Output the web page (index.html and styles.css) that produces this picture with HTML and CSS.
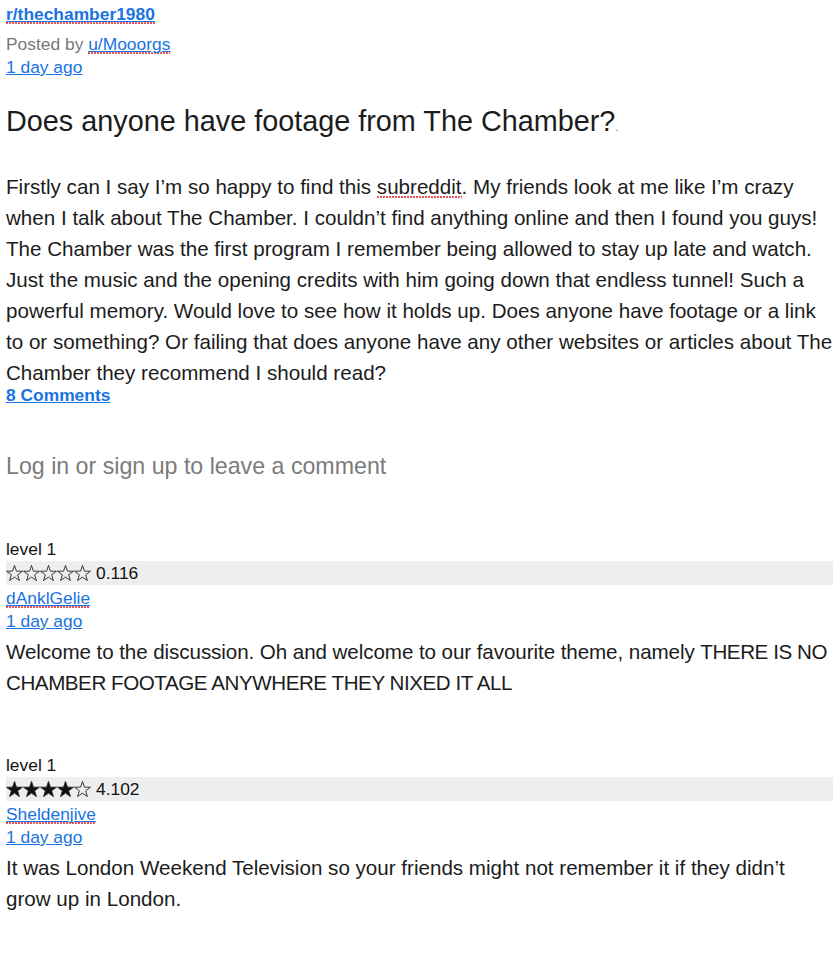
FILE: index.html
```html
<!DOCTYPE html>
<html lang="en">
<head>
<meta charset="utf-8">
<title>Does anyone have footage from The Chamber?</title>
<link rel="stylesheet" href="styles.css">
</head>
<body>
<main class="page">
  <header class="post-head">
    <a class="sub" href="#"><span class="sp">r/thechamber1980</span></a>
    <div class="meta">Posted by <a href="#"><span class="sp">u/Mooorgs</span></a></div>
    <div class="meta"><a href="#">1 day ago</a></div>
  </header>
  <h1 class="title">Does anyone have footage from The Chamber?<span class="dot">.</span></h1>
  <p class="body">Firstly can I say I’m so happy to find this <span class="sp">subreddit</span>. My friends look at me like I’m crazy when I talk about The Chamber. I couldn’t find anything online and then I found you guys! The Chamber was the first program I remember being allowed to stay up late and watch. Just the music and the opening credits with him going down that endless tunnel! Such a powerful memory. Would love to see how it holds up. Does anyone have footage or a link to or something? Or failing that does anyone have any other websites or articles about The Chamber they recommend I should read?</p>
  <a class="comments-link" href="#">8 Comments</a>

  <div class="login">Log in or sign up to leave a comment</div>

  <section class="comment">
    <div class="level">level 1</div>
    <div class="rating">
      <span class="stars">
        <svg viewBox="1.5 1.5 21 20" class="star"><polygon points="12,2 14.41,9.18 21.99,9.26 15.9,13.77 18.17,20.99 12,16.6 5.83,20.99 8.1,13.77 2.01,9.26 9.59,9.18"/></svg>
        <svg viewBox="1.5 1.5 21 20" class="star"><polygon points="12,2 14.41,9.18 21.99,9.26 15.9,13.77 18.17,20.99 12,16.6 5.83,20.99 8.1,13.77 2.01,9.26 9.59,9.18"/></svg>
        <svg viewBox="1.5 1.5 21 20" class="star"><polygon points="12,2 14.41,9.18 21.99,9.26 15.9,13.77 18.17,20.99 12,16.6 5.83,20.99 8.1,13.77 2.01,9.26 9.59,9.18"/></svg>
        <svg viewBox="1.5 1.5 21 20" class="star"><polygon points="12,2 14.41,9.18 21.99,9.26 15.9,13.77 18.17,20.99 12,16.6 5.83,20.99 8.1,13.77 2.01,9.26 9.59,9.18"/></svg>
        <svg viewBox="1.5 1.5 21 20" class="star"><polygon points="12,2 14.41,9.18 21.99,9.26 15.9,13.77 18.17,20.99 12,16.6 5.83,20.99 8.1,13.77 2.01,9.26 9.59,9.18"/></svg>
      </span>
      <span class="score">0.116</span>
    </div>
    <div class="author"><a href="#"><span class="sp">dAnklGelie</span></a></div>
    <div class="time"><a href="#">1 day ago</a></div>
    <p class="text tight">Welcome to the discussion. Oh and welcome to our favourite theme, namely <span class="caps">THERE IS NO CHAMBER FOOTAGE ANYWHERE THEY NIXED IT ALL</span></p>
  </section>

  <section class="comment">
    <div class="level">level 1</div>
    <div class="rating">
      <span class="stars">
        <svg viewBox="1.5 1.5 21 20" class="star full"><polygon points="12,2 14.41,9.18 21.99,9.26 15.9,13.77 18.17,20.99 12,16.6 5.83,20.99 8.1,13.77 2.01,9.26 9.59,9.18"/></svg>
        <svg viewBox="1.5 1.5 21 20" class="star full"><polygon points="12,2 14.41,9.18 21.99,9.26 15.9,13.77 18.17,20.99 12,16.6 5.83,20.99 8.1,13.77 2.01,9.26 9.59,9.18"/></svg>
        <svg viewBox="1.5 1.5 21 20" class="star full"><polygon points="12,2 14.41,9.18 21.99,9.26 15.9,13.77 18.17,20.99 12,16.6 5.83,20.99 8.1,13.77 2.01,9.26 9.59,9.18"/></svg>
        <svg viewBox="1.5 1.5 21 20" class="star full"><polygon points="12,2 14.41,9.18 21.99,9.26 15.9,13.77 18.17,20.99 12,16.6 5.83,20.99 8.1,13.77 2.01,9.26 9.59,9.18"/></svg>
        <svg viewBox="1.5 1.5 21 20" class="star"><polygon points="12,2 14.41,9.18 21.99,9.26 15.9,13.77 18.17,20.99 12,16.6 5.83,20.99 8.1,13.77 2.01,9.26 9.59,9.18"/></svg>
      </span>
      <span class="score">4.102</span>
    </div>
    <div class="author"><a href="#"><span class="sp">Sheldenjive</span></a></div>
    <div class="time"><a href="#">1 day ago</a></div>
    <p class="text">It was London Weekend Television so your friends might not remember it if they didn’t grow up in London.</p>
  </section>
</main>
</body>
</html>
```

FILE: styles.css
```css
html, body {
  margin: 0;
  padding: 0;
  background: #ffffff;
}

body {
  font-family: "Liberation Sans", Arial, Helvetica, sans-serif;
  color: #1c1c1c;
}

.page {
  padding: 0 7px 0 6px;
}

a {
  color: #1a73e0;
  text-decoration: underline;
}

.sp {
  background-image: radial-gradient(circle at 1px 1px, #e8555b 0.9px, transparent 1.1px);
  background-size: 3px 2px;
  background-repeat: repeat-x;
  background-position: left bottom;
}

.post-head {
  padding-top: 3px;
}

.sub {
  display: block;
  font-size: 17.4px;
  font-weight: bold;
  line-height: 22px;
  margin-bottom: 8px;
  width: max-content;
}

.meta {
  font-size: 17.4px;
  line-height: 23px;
  color: #777777;
}

.title {
  margin: 24px 0 0;
  font-size: 28.8px;
  font-weight: normal;
  line-height: 36px;
  color: #1c1c1c;
}

.title .dot {
  font-size: 10px;
  line-height: 1;
  color: #555;
}

.body {
  margin: 32px 0 0;
  font-size: 20.6px;
  line-height: 31px;
}

.comments-link {
  display: block;
  width: max-content;
  font-size: 17.4px;
  font-weight: bold;
  line-height: 15px;
}

.login {
  margin-top: 49px;
  font-size: 23.2px;
  line-height: 28px;
  color: #7b7b7b;
}

.comment {
  margin-top: 58px;
}

.comment + .comment {
  margin-top: 56px;
}

.level {
  font-size: 17.4px;
  line-height: 23px;
  color: #111;
}

.rating {
  display: flex;
  align-items: center;
  height: 24px;
  background: #edeef0;
  font-size: 17.4px;
  color: #111;
}

.stars {
  display: inline-flex;
  gap: 0;
  margin-right: 5px;
}

.star {
  width: 17px;
  height: 16px;
  display: block;
}

.star polygon {
  fill: none;
  stroke: #222;
  stroke-width: 1.1;
  stroke-linejoin: miter;
}

.star.full polygon {
  fill: #111;
}

.author {
  margin-top: 2px;
  font-size: 17.4px;
  line-height: 23px;
}

.time {
  font-size: 17.4px;
  line-height: 23px;
}

.text {
  margin: 3px 0 0;
  font-size: 20.6px;
  line-height: 31px;
}

.text.tight {
  letter-spacing: -0.08px;
}

.caps {
  letter-spacing: -0.45px;
}
```
